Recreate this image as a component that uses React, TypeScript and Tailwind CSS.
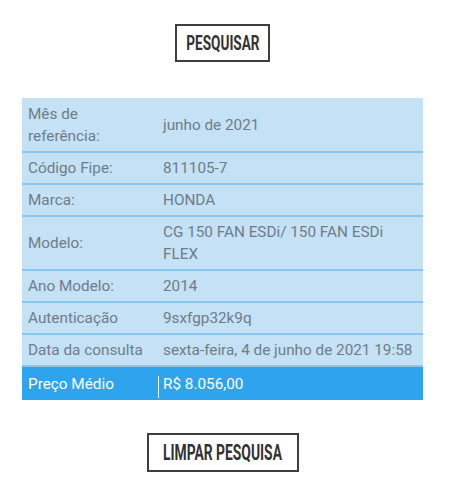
import React from "react";

const rows: { label: string[]; value: string[] }[] = [
  { label: ["Mês de", "referência:"], value: ["junho de 2021"] },
  { label: ["Código Fipe:"], value: ["811105-7"] },
  { label: ["Marca:"], value: ["HONDA"] },
  { label: ["Modelo:"], value: ["CG 150 FAN ESDi/ 150 FAN ESDi", "FLEX"] },
  { label: ["Ano Modelo:"], value: ["2014"] },
  { label: ["Autenticação"], value: ["9sxfgp32k9q"] },
  { label: ["Data da consulta"], value: ["sexta-feira, 4 de junho de 2021 19:58"] },
];

function Btn({ text, cls, textCls }: { text: string; cls: string; textCls: string }) {
  return (
    <div className={`flex items-center justify-center border-2 border-[#3e3e3e] bg-white ${cls}`}>
      <span
        className={`inline-block whitespace-nowrap font-bold text-[#333333] leading-none ${textCls}`}
        style={{ fontFamily: 'Roboto, sans-serif' }}
      >
        {text}
      </span>
    </div>
  );
}

export default function App() {
  return (
    <div className="w-[451px] h-[500px] bg-white" style={{ fontFamily: 'Roboto, "Liberation Sans", sans-serif' }}>
      <div className="ml-[22px] w-[401px] flex flex-col items-center pt-[24px]">
        <Btn text="PESQUISAR" cls="w-[95px] h-[38px]" textCls="text-[20px] scale-x-[0.68]" />
        <div className="w-full mt-[36px] bg-[#c4e1f5] text-[15.3px] leading-[22px] text-[#6f7d88]">
          {rows.map((r, i) => (
            <div key={i} className={`flex border-b-2 border-[#8cc4ea] ${i === 0 ? "pt-[1px]" : ""}`}>
              <div className="w-[136px] shrink-0 pl-[6px] py-[4px] flex flex-col justify-center">
                {r.label.map((l, j) => (
                  <div key={j}>{l}</div>
                ))}
              </div>
              <div className="pl-[5px] py-[4px] flex flex-col justify-center">
                {r.value.map((l, j) => (
                  <div key={j}>{l}</div>
                ))}
              </div>
            </div>
          ))}
          <div className="flex bg-[#2fa4ee] text-white h-[33px]">
            <div className="w-[136px] shrink-0 pl-[6px] flex items-center">Preço Médio</div>
            <div className="flex items-center">
              <span className="w-px h-[22px] bg-white mt-[6px] mr-[4px]" />
              <span>R$ 8.056,00</span>
            </div>
          </div>
        </div>
        <div className="mt-[33px]">
          <Btn text="LIMPAR PESQUISA" cls="w-[152px] h-[39px]" textCls="text-[22px] scale-x-[0.63]" />
        </div>
      </div>
    </div>
  );
}
